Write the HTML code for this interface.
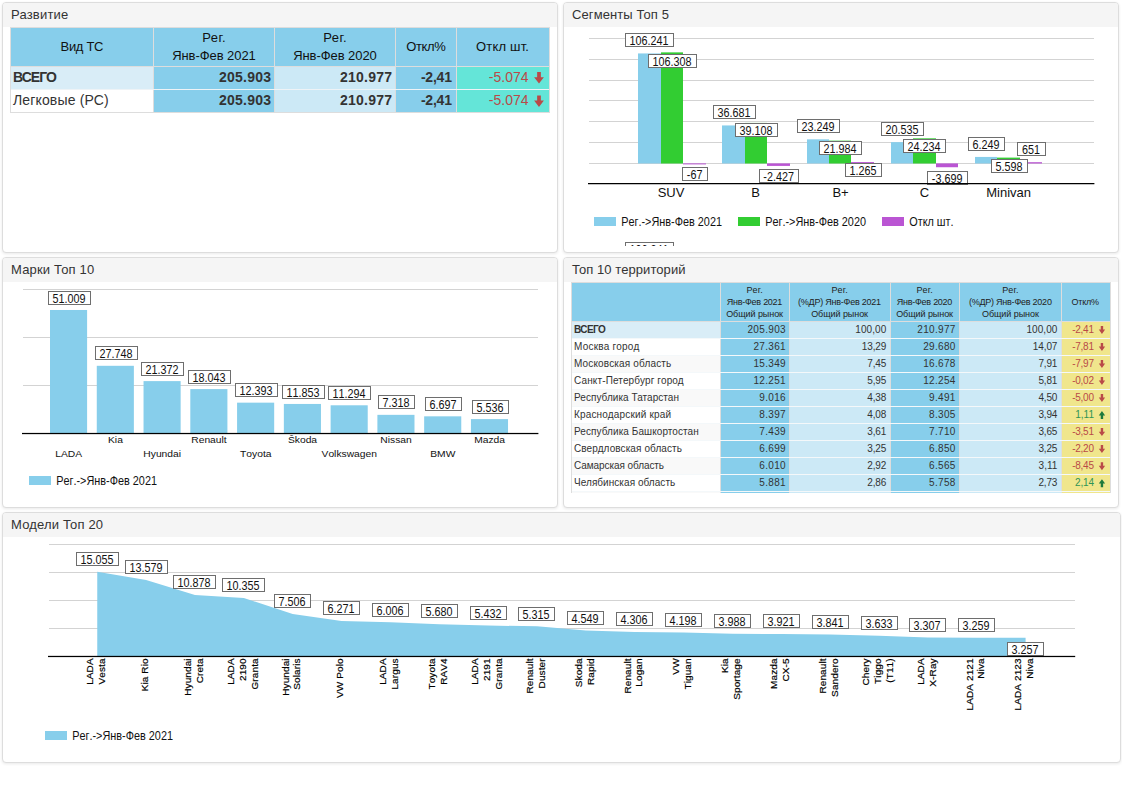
<!DOCTYPE html>
<html lang="ru"><head><meta charset="utf-8"><title>Dashboard</title><style>
html,body{margin:0;padding:0;background:#fff;}
body{width:1122px;height:793px;position:relative;overflow:hidden;font-family:"Liberation Sans",sans-serif;}
.b{position:absolute;}
.t{position:absolute;white-space:nowrap;}
.panel{position:absolute;box-sizing:border-box;border:1px solid #ddd;border-radius:4px;background:#fff;box-shadow:0 1px 3px rgba(0,0,0,.09);}
.ph{height:24px;background:#f5f5f5;border-radius:3px 3px 0 0;}
svg{overflow:visible;}
svg text{font-kerning:none;}
</style></head><body>
<div class="panel" style="left:2px;top:2px;width:556px;height:251px"><div class="ph"></div></div>
<span class="t" style="left:11.00px;top:7.00px;font-size:13px;line-height:15px;color:#333;letter-spacing:0.186px;">Развитие</span>
<div class="panel" style="left:563px;top:2px;width:556px;height:251px"><div class="ph"></div></div>
<span class="t" style="left:572.00px;top:7.00px;font-size:13px;line-height:15px;color:#333;letter-spacing:0.096px;">Сегменты Топ 5</span>
<div class="panel" style="left:2px;top:257px;width:556px;height:251px"><div class="ph"></div></div>
<span class="t" style="left:11.00px;top:262.00px;font-size:13px;line-height:15px;color:#333;letter-spacing:0.175px;">Марки Топ 10</span>
<div class="panel" style="left:563px;top:257px;width:556px;height:251px"><div class="ph"></div></div>
<span class="t" style="left:572.00px;top:262.00px;font-size:13px;line-height:15px;color:#333;letter-spacing:0.066px;">Топ 10 территорий</span>
<div class="panel" style="left:2px;top:512px;width:1119px;height:251px"><div class="ph"></div></div>
<span class="t" style="left:11.00px;top:517.00px;font-size:13px;line-height:15px;color:#333;letter-spacing:0.165px;">Модели Топ 20</span>
<div class="b" style="left:10px;top:27px;width:540px;height:86px;background:#dddddd;"></div>
<div class="b" style="left:11px;top:89px;width:538px;height:1px;background:#eef3f6;"></div>
<div class="b" style="left:11px;top:28px;width:142px;height:38px;background:#87ceeb;"></div>
<div class="b" style="left:11px;top:67px;width:142px;height:22px;background:#d9edf7;"></div>
<div class="b" style="left:11px;top:90px;width:142px;height:22px;background:#ffffff;"></div>
<div class="b" style="left:154px;top:28px;width:120px;height:38px;background:#87ceeb;"></div>
<div class="b" style="left:154px;top:67px;width:120px;height:22px;background:#87ceeb;"></div>
<div class="b" style="left:154px;top:90px;width:120px;height:22px;background:#87ceeb;"></div>
<div class="b" style="left:275px;top:28px;width:120px;height:38px;background:#87ceeb;"></div>
<div class="b" style="left:275px;top:67px;width:120px;height:22px;background:#cce9f6;"></div>
<div class="b" style="left:275px;top:90px;width:120px;height:22px;background:#cce9f6;"></div>
<div class="b" style="left:396px;top:28px;width:60px;height:38px;background:#87ceeb;"></div>
<div class="b" style="left:396px;top:67px;width:60px;height:22px;background:#87ceeb;"></div>
<div class="b" style="left:396px;top:90px;width:60px;height:22px;background:#87ceeb;"></div>
<div class="b" style="left:457px;top:28px;width:92px;height:38px;background:#87ceeb;"></div>
<div class="b" style="left:457px;top:67px;width:92px;height:22px;background:#64e5d8;"></div>
<div class="b" style="left:457px;top:90px;width:92px;height:22px;background:#64e5d8;"></div>
<span class="t" style="left:60.50px;top:39.00px;font-size:13px;line-height:15px;color:#111;letter-spacing:-0.291px;">Вид ТС</span>
<span class="t" style="left:202.28px;top:30.00px;font-size:13px;line-height:15px;color:#111;letter-spacing:0.451px;">Рег.</span>
<span class="t" style="left:172.16px;top:48.00px;font-size:13px;line-height:15px;color:#111;letter-spacing:-0.062px;">Янв-Фев 2021</span>
<span class="t" style="left:323.28px;top:30.00px;font-size:13px;line-height:15px;color:#111;letter-spacing:0.451px;">Рег.</span>
<span class="t" style="left:293.16px;top:48.00px;font-size:13px;line-height:15px;color:#111;letter-spacing:-0.062px;">Янв-Фев 2020</span>
<span class="t" style="left:406.19px;top:39.00px;font-size:13px;line-height:15px;color:#111;letter-spacing:-0.357px;">Откл%</span>
<span class="t" style="left:476.01px;top:39.00px;font-size:13px;line-height:15px;color:#111;letter-spacing:0.189px;">Откл шт.</span>
<span class="t" style="left:13.00px;top:69.00px;font-size:14px;line-height:16px;color:#333;font-weight:bold;letter-spacing:-0.941px;">ВСЕГО</span>
<span class="t" style="left:218.98px;top:69.00px;font-size:14px;line-height:16px;color:#333;font-weight:bold;letter-spacing:0.235px;">205.903</span>
<span class="t" style="left:339.98px;top:69.00px;font-size:14px;line-height:16px;color:#333;font-weight:bold;letter-spacing:0.235px;">210.977</span>
<span class="t" style="left:420.90px;top:69.00px;font-size:14px;line-height:16px;color:#333;font-weight:bold;letter-spacing:-0.202px;">-2,41</span>
<span class="t" style="left:488.79px;top:69.00px;font-size:14px;line-height:16px;color:#b94a48;letter-spacing:0.023px;">-5.074</span>
<svg class="b" style="left:0;top:0" width="1122" height="793"><polygon transform="translate(534.1,72.1) scale(0.9800,1.1500)" points="3.1,0 6.9,0 6.9,4.5 10,4.5 5,10 0,4.5 3.1,4.5" fill="#b94a48"/></svg>
<span class="t" style="left:13.00px;top:92.30px;font-size:14px;line-height:16px;color:#333;letter-spacing:0.145px;">Легковые (РС)</span>
<span class="t" style="left:218.98px;top:92.30px;font-size:14px;line-height:16px;color:#333;font-weight:bold;letter-spacing:0.235px;">205.903</span>
<span class="t" style="left:339.98px;top:92.30px;font-size:14px;line-height:16px;color:#333;font-weight:bold;letter-spacing:0.235px;">210.977</span>
<span class="t" style="left:420.90px;top:92.30px;font-size:14px;line-height:16px;color:#333;font-weight:bold;letter-spacing:-0.202px;">-2,41</span>
<span class="t" style="left:488.79px;top:92.30px;font-size:14px;line-height:16px;color:#b94a48;letter-spacing:0.023px;">-5.074</span>
<svg class="b" style="left:0;top:0" width="1122" height="793"><polygon transform="translate(534.1,95.39999999999999) scale(0.9800,1.1500)" points="3.1,0 6.9,0 6.9,4.5 10,4.5 5,10 0,4.5 3.1,4.5" fill="#b94a48"/></svg>
<div class="b" style="left:571px;top:282px;width:540px;height:211px;overflow:hidden">
<div class="b" style="left:0px;top:0px;width:540px;height:230px;background:#dddddd;"></div>
<div class="b" style="left:1px;top:1px;width:148px;height:38px;background:#87ceeb;"></div>
<div class="b" style="left:150px;top:1px;width:68px;height:38px;background:#87ceeb;"></div>
<div class="b" style="left:219px;top:1px;width:100px;height:38px;background:#87ceeb;"></div>
<div class="b" style="left:320px;top:1px;width:68px;height:38px;background:#87ceeb;"></div>
<div class="b" style="left:389px;top:1px;width:101px;height:38px;background:#87ceeb;"></div>
<div class="b" style="left:491px;top:1px;width:48px;height:38px;background:#87ceeb;"></div>
<div class="b" style="left:1px;top:40px;width:148px;height:16px;background:#d9edf7;"></div>
<div class="b" style="left:150px;top:40px;width:68px;height:16px;background:#87ceeb;"></div>
<div class="b" style="left:219px;top:40px;width:100px;height:16px;background:#cce9f6;"></div>
<div class="b" style="left:320px;top:40px;width:68px;height:16px;background:#87ceeb;"></div>
<div class="b" style="left:389px;top:40px;width:101px;height:16px;background:#cce9f6;"></div>
<div class="b" style="left:491px;top:40px;width:48px;height:16px;background:#f0e68c;"></div>
<div class="b" style="left:1px;top:56px;width:538px;height:1px;background:#f4f8fa;"></div>
<div class="b" style="left:1px;top:57px;width:148px;height:16px;background:#ffffff;"></div>
<div class="b" style="left:150px;top:57px;width:68px;height:16px;background:#87ceeb;"></div>
<div class="b" style="left:219px;top:57px;width:100px;height:16px;background:#cce9f6;"></div>
<div class="b" style="left:320px;top:57px;width:68px;height:16px;background:#87ceeb;"></div>
<div class="b" style="left:389px;top:57px;width:101px;height:16px;background:#cce9f6;"></div>
<div class="b" style="left:491px;top:57px;width:48px;height:16px;background:#f0e68c;"></div>
<div class="b" style="left:1px;top:73px;width:538px;height:1px;background:#f4f8fa;"></div>
<div class="b" style="left:1px;top:74px;width:148px;height:16px;background:#f9f9f9;"></div>
<div class="b" style="left:150px;top:74px;width:68px;height:16px;background:#87ceeb;"></div>
<div class="b" style="left:219px;top:74px;width:100px;height:16px;background:#cce9f6;"></div>
<div class="b" style="left:320px;top:74px;width:68px;height:16px;background:#87ceeb;"></div>
<div class="b" style="left:389px;top:74px;width:101px;height:16px;background:#cce9f6;"></div>
<div class="b" style="left:491px;top:74px;width:48px;height:16px;background:#f0e68c;"></div>
<div class="b" style="left:1px;top:90px;width:538px;height:1px;background:#f4f8fa;"></div>
<div class="b" style="left:1px;top:91px;width:148px;height:16px;background:#ffffff;"></div>
<div class="b" style="left:150px;top:91px;width:68px;height:16px;background:#87ceeb;"></div>
<div class="b" style="left:219px;top:91px;width:100px;height:16px;background:#cce9f6;"></div>
<div class="b" style="left:320px;top:91px;width:68px;height:16px;background:#87ceeb;"></div>
<div class="b" style="left:389px;top:91px;width:101px;height:16px;background:#cce9f6;"></div>
<div class="b" style="left:491px;top:91px;width:48px;height:16px;background:#f0e68c;"></div>
<div class="b" style="left:1px;top:107px;width:538px;height:1px;background:#f4f8fa;"></div>
<div class="b" style="left:1px;top:108px;width:148px;height:16px;background:#f9f9f9;"></div>
<div class="b" style="left:150px;top:108px;width:68px;height:16px;background:#87ceeb;"></div>
<div class="b" style="left:219px;top:108px;width:100px;height:16px;background:#cce9f6;"></div>
<div class="b" style="left:320px;top:108px;width:68px;height:16px;background:#87ceeb;"></div>
<div class="b" style="left:389px;top:108px;width:101px;height:16px;background:#cce9f6;"></div>
<div class="b" style="left:491px;top:108px;width:48px;height:16px;background:#f0e68c;"></div>
<div class="b" style="left:1px;top:124px;width:538px;height:1px;background:#f4f8fa;"></div>
<div class="b" style="left:1px;top:125px;width:148px;height:16px;background:#ffffff;"></div>
<div class="b" style="left:150px;top:125px;width:68px;height:16px;background:#87ceeb;"></div>
<div class="b" style="left:219px;top:125px;width:100px;height:16px;background:#cce9f6;"></div>
<div class="b" style="left:320px;top:125px;width:68px;height:16px;background:#87ceeb;"></div>
<div class="b" style="left:389px;top:125px;width:101px;height:16px;background:#cce9f6;"></div>
<div class="b" style="left:491px;top:125px;width:48px;height:16px;background:#f0e68c;"></div>
<div class="b" style="left:1px;top:141px;width:538px;height:1px;background:#f4f8fa;"></div>
<div class="b" style="left:1px;top:142px;width:148px;height:16px;background:#f9f9f9;"></div>
<div class="b" style="left:150px;top:142px;width:68px;height:16px;background:#87ceeb;"></div>
<div class="b" style="left:219px;top:142px;width:100px;height:16px;background:#cce9f6;"></div>
<div class="b" style="left:320px;top:142px;width:68px;height:16px;background:#87ceeb;"></div>
<div class="b" style="left:389px;top:142px;width:101px;height:16px;background:#cce9f6;"></div>
<div class="b" style="left:491px;top:142px;width:48px;height:16px;background:#f0e68c;"></div>
<div class="b" style="left:1px;top:158px;width:538px;height:1px;background:#f4f8fa;"></div>
<div class="b" style="left:1px;top:159px;width:148px;height:16px;background:#ffffff;"></div>
<div class="b" style="left:150px;top:159px;width:68px;height:16px;background:#87ceeb;"></div>
<div class="b" style="left:219px;top:159px;width:100px;height:16px;background:#cce9f6;"></div>
<div class="b" style="left:320px;top:159px;width:68px;height:16px;background:#87ceeb;"></div>
<div class="b" style="left:389px;top:159px;width:101px;height:16px;background:#cce9f6;"></div>
<div class="b" style="left:491px;top:159px;width:48px;height:16px;background:#f0e68c;"></div>
<div class="b" style="left:1px;top:175px;width:538px;height:1px;background:#f4f8fa;"></div>
<div class="b" style="left:1px;top:176px;width:148px;height:16px;background:#f9f9f9;"></div>
<div class="b" style="left:150px;top:176px;width:68px;height:16px;background:#87ceeb;"></div>
<div class="b" style="left:219px;top:176px;width:100px;height:16px;background:#cce9f6;"></div>
<div class="b" style="left:320px;top:176px;width:68px;height:16px;background:#87ceeb;"></div>
<div class="b" style="left:389px;top:176px;width:101px;height:16px;background:#cce9f6;"></div>
<div class="b" style="left:491px;top:176px;width:48px;height:16px;background:#f0e68c;"></div>
<div class="b" style="left:1px;top:192px;width:538px;height:1px;background:#f4f8fa;"></div>
<div class="b" style="left:1px;top:193px;width:148px;height:16px;background:#ffffff;"></div>
<div class="b" style="left:150px;top:193px;width:68px;height:16px;background:#87ceeb;"></div>
<div class="b" style="left:219px;top:193px;width:100px;height:16px;background:#cce9f6;"></div>
<div class="b" style="left:320px;top:193px;width:68px;height:16px;background:#87ceeb;"></div>
<div class="b" style="left:389px;top:193px;width:101px;height:16px;background:#cce9f6;"></div>
<div class="b" style="left:491px;top:193px;width:48px;height:16px;background:#f0e68c;"></div>
<div class="b" style="left:1px;top:209px;width:538px;height:1px;background:#f4f8fa;"></div>
<div class="b" style="left:1px;top:210px;width:148px;height:16px;background:#f9f9f9;"></div>
<div class="b" style="left:150px;top:210px;width:68px;height:16px;background:#87ceeb;"></div>
<div class="b" style="left:219px;top:210px;width:100px;height:16px;background:#cce9f6;"></div>
<div class="b" style="left:320px;top:210px;width:68px;height:16px;background:#87ceeb;"></div>
<div class="b" style="left:389px;top:210px;width:101px;height:16px;background:#cce9f6;"></div>
<div class="b" style="left:491px;top:210px;width:48px;height:16px;background:#f0e68c;"></div>
</div>
<span class="t" style="left:746.48px;top:285.00px;font-size:9px;line-height:10px;color:#222;letter-spacing:0.312px;">Рег.</span>
<span class="t" style="left:726.83px;top:297.00px;font-size:9px;line-height:10px;color:#222;letter-spacing:-0.260px;">Янв-Фев 2021</span>
<span class="t" style="left:726.17px;top:309.00px;font-size:9px;line-height:10px;color:#222;letter-spacing:-0.064px;">Общий рынок</span>
<span class="t" style="left:831.48px;top:285.00px;font-size:9px;line-height:10px;color:#222;letter-spacing:0.312px;">Рег.</span>
<span class="t" style="left:798.10px;top:297.00px;font-size:9px;line-height:10px;color:#222;letter-spacing:-0.235px;">(%ДР) Янв-Фев 2021</span>
<span class="t" style="left:811.17px;top:309.00px;font-size:9px;line-height:10px;color:#222;letter-spacing:-0.064px;">Общий рынок</span>
<span class="t" style="left:916.48px;top:285.00px;font-size:9px;line-height:10px;color:#222;letter-spacing:0.312px;">Рег.</span>
<span class="t" style="left:896.83px;top:297.00px;font-size:9px;line-height:10px;color:#222;letter-spacing:-0.260px;">Янв-Фев 2020</span>
<span class="t" style="left:896.17px;top:309.00px;font-size:9px;line-height:10px;color:#222;letter-spacing:-0.064px;">Общий рынок</span>
<span class="t" style="left:1002.28px;top:285.00px;font-size:9px;line-height:10px;color:#222;letter-spacing:0.312px;">Рег.</span>
<span class="t" style="left:968.90px;top:297.00px;font-size:9px;line-height:10px;color:#222;letter-spacing:-0.235px;">(%ДР) Янв-Фев 2020</span>
<span class="t" style="left:981.97px;top:309.00px;font-size:9px;line-height:10px;color:#222;letter-spacing:-0.064px;">Общий рынок</span>
<span class="t" style="left:1071.59px;top:297.00px;font-size:9px;line-height:10px;color:#222;letter-spacing:-0.247px;">Откл%</span>
<span class="t" style="left:574.00px;top:324.00px;font-size:10px;line-height:11px;color:#333;font-weight:bold;letter-spacing:-0.572px;">ВСЕГО</span>
<span class="t" style="left:747.47px;top:324.00px;font-size:10px;line-height:11px;color:#333;letter-spacing:0.330px;">205.903</span>
<span class="t" style="left:855.31px;top:324.00px;font-size:10px;line-height:11px;color:#333;letter-spacing:0.080px;">100,00</span>
<span class="t" style="left:917.27px;top:324.00px;font-size:10px;line-height:11px;color:#333;letter-spacing:0.330px;">210.977</span>
<span class="t" style="left:1026.41px;top:324.00px;font-size:10px;line-height:11px;color:#333;letter-spacing:0.080px;">100,00</span>
<span class="t" style="left:1072.17px;top:324.00px;font-size:10px;line-height:11px;color:#b94a48;letter-spacing:-0.240px;">-2,41</span>
<svg class="b" style="left:0;top:0" width="1122" height="793"><polygon transform="translate(1098.8,325.9) scale(0.6300,0.8000)" points="3.1,0 6.9,0 6.9,4.5 10,4.5 5,10 0,4.5 3.1,4.5" fill="#b94a48"/></svg>
<span class="t" style="left:574.00px;top:341.03px;font-size:10px;line-height:11px;color:#333;letter-spacing:0.239px;">Москва город</span>
<span class="t" style="left:753.39px;top:341.03px;font-size:10px;line-height:11px;color:#333;letter-spacing:0.325px;">27.361</span>
<span class="t" style="left:861.74px;top:341.03px;font-size:10px;line-height:11px;color:#333;letter-spacing:-0.115px;">13,29</span>
<span class="t" style="left:923.19px;top:341.03px;font-size:10px;line-height:11px;color:#333;letter-spacing:0.325px;">29.680</span>
<span class="t" style="left:1032.84px;top:341.03px;font-size:10px;line-height:11px;color:#333;letter-spacing:-0.115px;">14,07</span>
<span class="t" style="left:1072.17px;top:341.03px;font-size:10px;line-height:11px;color:#b94a48;letter-spacing:-0.240px;">-7,81</span>
<svg class="b" style="left:0;top:0" width="1122" height="793"><polygon transform="translate(1098.8,342.92999999999995) scale(0.6300,0.8000)" points="3.1,0 6.9,0 6.9,4.5 10,4.5 5,10 0,4.5 3.1,4.5" fill="#b94a48"/></svg>
<span class="t" style="left:574.00px;top:358.06px;font-size:10px;line-height:11px;color:#333;letter-spacing:0.158px;">Московская область</span>
<span class="t" style="left:753.39px;top:358.06px;font-size:10px;line-height:11px;color:#333;letter-spacing:0.325px;">15.349</span>
<span class="t" style="left:867.31px;top:358.06px;font-size:10px;line-height:11px;color:#333;letter-spacing:-0.159px;">7,45</span>
<span class="t" style="left:923.19px;top:358.06px;font-size:10px;line-height:11px;color:#333;letter-spacing:0.325px;">16.678</span>
<span class="t" style="left:1038.41px;top:358.06px;font-size:10px;line-height:11px;color:#333;letter-spacing:-0.159px;">7,91</span>
<span class="t" style="left:1072.17px;top:358.06px;font-size:10px;line-height:11px;color:#b94a48;letter-spacing:-0.240px;">-7,97</span>
<svg class="b" style="left:0;top:0" width="1122" height="793"><polygon transform="translate(1098.8,359.96) scale(0.6300,0.8000)" points="3.1,0 6.9,0 6.9,4.5 10,4.5 5,10 0,4.5 3.1,4.5" fill="#b94a48"/></svg>
<span class="t" style="left:574.00px;top:375.09px;font-size:10px;line-height:11px;color:#333;letter-spacing:0.135px;">Санкт-Петербург город</span>
<span class="t" style="left:753.39px;top:375.09px;font-size:10px;line-height:11px;color:#333;letter-spacing:0.325px;">12.251</span>
<span class="t" style="left:867.31px;top:375.09px;font-size:10px;line-height:11px;color:#333;letter-spacing:-0.159px;">5,95</span>
<span class="t" style="left:923.19px;top:375.09px;font-size:10px;line-height:11px;color:#333;letter-spacing:0.325px;">12.254</span>
<span class="t" style="left:1038.41px;top:375.09px;font-size:10px;line-height:11px;color:#333;letter-spacing:-0.159px;">5,81</span>
<span class="t" style="left:1072.17px;top:375.09px;font-size:10px;line-height:11px;color:#b94a48;letter-spacing:-0.240px;">-0,02</span>
<svg class="b" style="left:0;top:0" width="1122" height="793"><polygon transform="translate(1098.8,376.99) scale(0.6300,0.8000)" points="3.1,0 6.9,0 6.9,4.5 10,4.5 5,10 0,4.5 3.1,4.5" fill="#b94a48"/></svg>
<span class="t" style="left:574.00px;top:392.12px;font-size:10px;line-height:11px;color:#333;letter-spacing:0.047px;">Республика Татарстан</span>
<span class="t" style="left:759.30px;top:392.12px;font-size:10px;line-height:11px;color:#333;letter-spacing:0.319px;">9.016</span>
<span class="t" style="left:867.31px;top:392.12px;font-size:10px;line-height:11px;color:#333;letter-spacing:-0.159px;">4,38</span>
<span class="t" style="left:929.10px;top:392.12px;font-size:10px;line-height:11px;color:#333;letter-spacing:0.319px;">9.491</span>
<span class="t" style="left:1038.41px;top:392.12px;font-size:10px;line-height:11px;color:#333;letter-spacing:-0.159px;">4,50</span>
<span class="t" style="left:1072.17px;top:392.12px;font-size:10px;line-height:11px;color:#b94a48;letter-spacing:-0.240px;">-5,00</span>
<svg class="b" style="left:0;top:0" width="1122" height="793"><polygon transform="translate(1098.8,394.02) scale(0.6300,0.8000)" points="3.1,0 6.9,0 6.9,4.5 10,4.5 5,10 0,4.5 3.1,4.5" fill="#b94a48"/></svg>
<span class="t" style="left:574.00px;top:409.15px;font-size:10px;line-height:11px;color:#333;letter-spacing:0.168px;">Краснодарский край</span>
<span class="t" style="left:759.30px;top:409.15px;font-size:10px;line-height:11px;color:#333;letter-spacing:0.319px;">8.397</span>
<span class="t" style="left:867.31px;top:409.15px;font-size:10px;line-height:11px;color:#333;letter-spacing:-0.159px;">4,08</span>
<span class="t" style="left:929.10px;top:409.15px;font-size:10px;line-height:11px;color:#333;letter-spacing:0.319px;">8.305</span>
<span class="t" style="left:1038.41px;top:409.15px;font-size:10px;line-height:11px;color:#333;letter-spacing:-0.159px;">3,94</span>
<span class="t" style="left:1075.20px;top:409.15px;font-size:10px;line-height:11px;color:#2f9455;letter-spacing:0.027px;">1,11</span>
<svg class="b" style="left:0;top:0" width="1122" height="793"><polygon transform="translate(1098.8,419.04999999999995) scale(0.6300,-0.8000)" points="3.1,0 6.9,0 6.9,4.5 10,4.5 5,10 0,4.5 3.1,4.5" fill="#1f7a3d"/></svg>
<span class="t" style="left:574.00px;top:426.18px;font-size:10px;line-height:11px;color:#333;letter-spacing:0.077px;">Республика Башкортостан</span>
<span class="t" style="left:759.30px;top:426.18px;font-size:10px;line-height:11px;color:#333;letter-spacing:0.319px;">7.439</span>
<span class="t" style="left:867.31px;top:426.18px;font-size:10px;line-height:11px;color:#333;letter-spacing:-0.159px;">3,61</span>
<span class="t" style="left:929.10px;top:426.18px;font-size:10px;line-height:11px;color:#333;letter-spacing:0.319px;">7.710</span>
<span class="t" style="left:1038.41px;top:426.18px;font-size:10px;line-height:11px;color:#333;letter-spacing:-0.159px;">3,65</span>
<span class="t" style="left:1072.17px;top:426.18px;font-size:10px;line-height:11px;color:#b94a48;letter-spacing:-0.240px;">-3,51</span>
<svg class="b" style="left:0;top:0" width="1122" height="793"><polygon transform="translate(1098.8,428.08) scale(0.6300,0.8000)" points="3.1,0 6.9,0 6.9,4.5 10,4.5 5,10 0,4.5 3.1,4.5" fill="#b94a48"/></svg>
<span class="t" style="left:574.00px;top:443.21px;font-size:10px;line-height:11px;color:#333;letter-spacing:0.092px;">Свердловская область</span>
<span class="t" style="left:759.30px;top:443.21px;font-size:10px;line-height:11px;color:#333;letter-spacing:0.319px;">6.699</span>
<span class="t" style="left:867.31px;top:443.21px;font-size:10px;line-height:11px;color:#333;letter-spacing:-0.159px;">3,25</span>
<span class="t" style="left:929.10px;top:443.21px;font-size:10px;line-height:11px;color:#333;letter-spacing:0.319px;">6.850</span>
<span class="t" style="left:1038.41px;top:443.21px;font-size:10px;line-height:11px;color:#333;letter-spacing:-0.159px;">3,25</span>
<span class="t" style="left:1072.17px;top:443.21px;font-size:10px;line-height:11px;color:#b94a48;letter-spacing:-0.240px;">-2,20</span>
<svg class="b" style="left:0;top:0" width="1122" height="793"><polygon transform="translate(1098.8,445.11) scale(0.6300,0.8000)" points="3.1,0 6.9,0 6.9,4.5 10,4.5 5,10 0,4.5 3.1,4.5" fill="#b94a48"/></svg>
<span class="t" style="left:574.00px;top:460.24px;font-size:10px;line-height:11px;color:#333;letter-spacing:-0.075px;">Самарская область</span>
<span class="t" style="left:759.30px;top:460.24px;font-size:10px;line-height:11px;color:#333;letter-spacing:0.319px;">6.010</span>
<span class="t" style="left:867.31px;top:460.24px;font-size:10px;line-height:11px;color:#333;letter-spacing:-0.159px;">2,92</span>
<span class="t" style="left:929.10px;top:460.24px;font-size:10px;line-height:11px;color:#333;letter-spacing:0.319px;">6.565</span>
<span class="t" style="left:1038.60px;top:460.24px;font-size:10px;line-height:11px;color:#333;letter-spacing:0.027px;">3,11</span>
<span class="t" style="left:1072.17px;top:460.24px;font-size:10px;line-height:11px;color:#b94a48;letter-spacing:-0.240px;">-8,45</span>
<svg class="b" style="left:0;top:0" width="1122" height="793"><polygon transform="translate(1098.8,462.14) scale(0.6300,0.8000)" points="3.1,0 6.9,0 6.9,4.5 10,4.5 5,10 0,4.5 3.1,4.5" fill="#b94a48"/></svg>
<span class="t" style="left:574.00px;top:477.27px;font-size:10px;line-height:11px;color:#333;letter-spacing:0.049px;">Челябинская область</span>
<span class="t" style="left:759.30px;top:477.27px;font-size:10px;line-height:11px;color:#333;letter-spacing:0.319px;">5.881</span>
<span class="t" style="left:867.31px;top:477.27px;font-size:10px;line-height:11px;color:#333;letter-spacing:-0.159px;">2,86</span>
<span class="t" style="left:929.10px;top:477.27px;font-size:10px;line-height:11px;color:#333;letter-spacing:0.319px;">5.758</span>
<span class="t" style="left:1038.41px;top:477.27px;font-size:10px;line-height:11px;color:#333;letter-spacing:-0.159px;">2,73</span>
<span class="t" style="left:1075.01px;top:477.27px;font-size:10px;line-height:11px;color:#2f9455;letter-spacing:-0.159px;">2,14</span>
<svg class="b" style="left:0;top:0" width="1122" height="793"><polygon transform="translate(1098.8,487.16999999999996) scale(0.6300,-0.8000)" points="3.1,0 6.9,0 6.9,4.5 10,4.5 5,10 0,4.5 3.1,4.5" fill="#1f7a3d"/></svg>
<svg class="b" style="left:0;top:0" width="1122" height="793" font-family='"Liberation Sans", sans-serif'><defs><clipPath id="c2"><rect x="564" y="27" width="554" height="219"/></clipPath></defs><g clip-path="url(#c2)"><rect x="589" y="38" width="505" height="1" fill="#d3d3d3"/><rect x="589" y="59" width="505" height="1" fill="#d3d3d3"/><rect x="589" y="80" width="505" height="1" fill="#d3d3d3"/><rect x="589" y="100" width="505" height="1" fill="#d3d3d3"/><rect x="589" y="121" width="505" height="1" fill="#d3d3d3"/><rect x="589" y="142" width="505" height="1" fill="#d3d3d3"/><rect x="589" y="163" width="505" height="1" fill="#d3d3d3"/><rect x="638" y="53.44" width="23" height="110.06" fill="#87ceeb"/><rect x="661" y="52.37" width="22" height="111.13" fill="#32cd32"/><rect x="683" y="163.40" width="23" height="1.00" fill="#ba55d3"/><rect x="722" y="125.44" width="23" height="38.06" fill="#87ceeb"/><rect x="745" y="122.92" width="22" height="40.58" fill="#32cd32"/><rect x="767" y="163.40" width="23" height="2.51" fill="#ba55d3"/><rect x="807" y="139.34" width="22" height="24.16" fill="#87ceeb"/><rect x="829" y="140.65" width="22" height="22.85" fill="#32cd32"/><rect x="851" y="162.09" width="23" height="1.41" fill="#ba55d3"/><rect x="891" y="142.15" width="22" height="21.35" fill="#87ceeb"/><rect x="913" y="138.32" width="23" height="25.18" fill="#32cd32"/><rect x="936" y="163.40" width="22" height="3.83" fill="#ba55d3"/><rect x="975" y="156.93" width="22" height="6.57" fill="#87ceeb"/><rect x="997" y="157.61" width="23" height="5.89" fill="#32cd32"/><rect x="1020" y="162.20" width="22" height="1.30" fill="#ba55d3"/><rect x="625.5" y="33.5" width="48" height="13" fill="#fff" stroke="#6e6e6e" stroke-width="1"/><text transform="translate(649.10,44.70) scale(1,1.14)" text-anchor="middle" font-size="10.8" fill="#111">106.241</text><rect x="648.5" y="54.5" width="48" height="13" fill="#fff" stroke="#6e6e6e" stroke-width="1"/><text transform="translate(672.10,65.70) scale(1,1.14)" text-anchor="middle" font-size="10.8" fill="#111">106.308</text><rect x="682.5" y="167.5" width="25" height="13" fill="#fff" stroke="#6e6e6e" stroke-width="1"/><text transform="translate(694.60,178.70) scale(1,1.14)" text-anchor="middle" font-size="10.8" fill="#111">-67</text><rect x="713.5" y="105.5" width="42" height="13" fill="#fff" stroke="#6e6e6e" stroke-width="1"/><text transform="translate(734.10,116.70) scale(1,1.14)" text-anchor="middle" font-size="10.8" fill="#111">36.681</text><rect x="735.5" y="123.5" width="42" height="13" fill="#fff" stroke="#6e6e6e" stroke-width="1"/><text transform="translate(756.10,134.70) scale(1,1.14)" text-anchor="middle" font-size="10.8" fill="#111">39.108</text><rect x="759.5" y="169.5" width="39" height="13" fill="#fff" stroke="#6e6e6e" stroke-width="1"/><text transform="translate(778.60,180.70) scale(1,1.14)" text-anchor="middle" font-size="10.8" fill="#111">-2.427</text><rect x="797.5" y="119.5" width="42" height="13" fill="#fff" stroke="#6e6e6e" stroke-width="1"/><text transform="translate(818.10,130.70) scale(1,1.14)" text-anchor="middle" font-size="10.8" fill="#111">23.249</text><rect x="819.5" y="141.5" width="42" height="13" fill="#fff" stroke="#6e6e6e" stroke-width="1"/><text transform="translate(840.10,152.70) scale(1,1.14)" text-anchor="middle" font-size="10.8" fill="#111">21.984</text><rect x="845.5" y="163.5" width="36" height="13" fill="#fff" stroke="#6e6e6e" stroke-width="1"/><text transform="translate(863.10,174.70) scale(1,1.14)" text-anchor="middle" font-size="10.8" fill="#111">1.265</text><rect x="881.5" y="122.5" width="42" height="13" fill="#fff" stroke="#6e6e6e" stroke-width="1"/><text transform="translate(902.10,133.70) scale(1,1.14)" text-anchor="middle" font-size="10.8" fill="#111">20.535</text><rect x="903.5" y="139.5" width="42" height="13" fill="#fff" stroke="#6e6e6e" stroke-width="1"/><text transform="translate(924.10,150.70) scale(1,1.14)" text-anchor="middle" font-size="10.8" fill="#111">24.234</text><rect x="927.5" y="171.5" width="40" height="13" fill="#fff" stroke="#6e6e6e" stroke-width="1"/><text transform="translate(947.10,182.70) scale(1,1.14)" text-anchor="middle" font-size="10.8" fill="#111">-3.699</text><rect x="968.5" y="137.5" width="36" height="13" fill="#fff" stroke="#6e6e6e" stroke-width="1"/><text transform="translate(986.10,148.70) scale(1,1.14)" text-anchor="middle" font-size="10.8" fill="#111">6.249</text><rect x="991.5" y="159.5" width="36" height="13" fill="#fff" stroke="#6e6e6e" stroke-width="1"/><text transform="translate(1009.10,170.70) scale(1,1.14)" text-anchor="middle" font-size="10.8" fill="#111">5.598</text><rect x="1017.5" y="142.5" width="28" height="13" fill="#fff" stroke="#6e6e6e" stroke-width="1"/><text transform="translate(1031.10,153.70) scale(1,1.14)" text-anchor="middle" font-size="10.8" fill="#111">651</text><rect x="588" y="183" width="506.4" height="1.25" fill="#000"/><text x="671" y="196.8" text-anchor="middle" font-size="13" fill="#111">SUV</text><text x="755.6" y="196.8" text-anchor="middle" font-size="13" fill="#111">B</text><text x="840.6" y="196.8" text-anchor="middle" font-size="13" fill="#111">B+</text><text x="924.5" y="196.8" text-anchor="middle" font-size="13" fill="#111">C</text><text x="1008.6" y="196.8" text-anchor="middle" font-size="13" fill="#111">Minivan</text><rect x="594" y="217" width="22" height="9" fill="#87ceeb"/><text transform="translate(621.2,226.2) scale(1,1.14)" font-size="10.88" fill="#111">Рег.->Янв-Фев 2021</text><rect x="738" y="217" width="22" height="9" fill="#32cd32"/><text transform="translate(765.2,226.2) scale(1,1.14)" font-size="10.88" fill="#111">Рег.->Янв-Фев 2020</text><rect x="882" y="217" width="22" height="9" fill="#ba55d3"/><text transform="translate(909.2,226.2) scale(1,1.14)" font-size="10.88" fill="#111">Откл шт.</text><rect x="625.5" y="242.5" width="48" height="13" fill="#fff" stroke="#6e6e6e" stroke-width="1"/><text transform="translate(649.10,253.70) scale(1,1.14)" text-anchor="middle" font-size="10.8" fill="#111">106.241</text></g></svg>
<svg class="b" style="left:0;top:0" width="1122" height="793" font-family='"Liberation Sans", sans-serif'><rect x="23" y="289" width="515" height="1" fill="#d3d3d3"/><rect x="23" y="337" width="515" height="1" fill="#d3d3d3"/><rect x="23" y="385" width="515" height="1" fill="#d3d3d3"/><rect x="50.00" y="309.98" width="37.1" height="123.22" fill="#87ceeb"/><rect x="48.5" y="291.5" width="42" height="13" fill="#fff" stroke="#6e6e6e" stroke-width="1"/><text transform="translate(69.10,302.70) scale(1,1.14)" text-anchor="middle" font-size="10.8" fill="#111">51.009</text><text transform="translate(68.65,456.8) scale(1,0.93)" text-anchor="middle" font-size="10.3" fill="#111">LADA</text><rect x="96.77" y="365.80" width="37.1" height="67.40" fill="#87ceeb"/><rect x="95.5" y="346.5" width="42" height="13" fill="#fff" stroke="#6e6e6e" stroke-width="1"/><text transform="translate(116.10,357.70) scale(1,1.14)" text-anchor="middle" font-size="10.8" fill="#111">27.748</text><text transform="translate(115.42,443.2) scale(1,0.93)" text-anchor="middle" font-size="10.3" fill="#111">Kia</text><rect x="143.54" y="381.11" width="37.1" height="52.09" fill="#87ceeb"/><rect x="141.5" y="362.5" width="42" height="13" fill="#fff" stroke="#6e6e6e" stroke-width="1"/><text transform="translate(162.10,373.70) scale(1,1.14)" text-anchor="middle" font-size="10.8" fill="#111">21.372</text><text transform="translate(162.19,456.8) scale(1,0.93)" text-anchor="middle" font-size="10.3" fill="#111">Hyundai</text><rect x="190.31" y="389.10" width="37.1" height="44.10" fill="#87ceeb"/><rect x="188.5" y="370.5" width="42" height="13" fill="#fff" stroke="#6e6e6e" stroke-width="1"/><text transform="translate(209.10,381.70) scale(1,1.14)" text-anchor="middle" font-size="10.8" fill="#111">18.043</text><text transform="translate(208.96,443.2) scale(1,0.93)" text-anchor="middle" font-size="10.3" fill="#111">Renault</text><rect x="237.08" y="402.66" width="37.1" height="30.54" fill="#87ceeb"/><rect x="235.5" y="383.5" width="42" height="13" fill="#fff" stroke="#6e6e6e" stroke-width="1"/><text transform="translate(256.10,394.70) scale(1,1.14)" text-anchor="middle" font-size="10.8" fill="#111">12.393</text><text transform="translate(255.73,456.8) scale(1,0.93)" text-anchor="middle" font-size="10.3" fill="#111">Toyota</text><rect x="283.85" y="403.95" width="37.1" height="29.25" fill="#87ceeb"/><rect x="282.5" y="385.5" width="42" height="13" fill="#fff" stroke="#6e6e6e" stroke-width="1"/><text transform="translate(303.10,396.70) scale(1,1.14)" text-anchor="middle" font-size="10.8" fill="#111">11.853</text><text transform="translate(302.50,443.2) scale(1,0.93)" text-anchor="middle" font-size="10.3" fill="#111">Škoda</text><rect x="330.62" y="405.29" width="37.1" height="27.91" fill="#87ceeb"/><rect x="328.5" y="386.5" width="42" height="13" fill="#fff" stroke="#6e6e6e" stroke-width="1"/><text transform="translate(349.10,397.70) scale(1,1.14)" text-anchor="middle" font-size="10.8" fill="#111">11.294</text><text transform="translate(349.27,456.8) scale(1,0.93)" text-anchor="middle" font-size="10.3" fill="#111">Volkswagen</text><rect x="377.39" y="414.84" width="37.1" height="18.36" fill="#87ceeb"/><rect x="378.5" y="395.5" width="36" height="13" fill="#fff" stroke="#6e6e6e" stroke-width="1"/><text transform="translate(396.10,406.70) scale(1,1.14)" text-anchor="middle" font-size="10.8" fill="#111">7.318</text><text transform="translate(396.04,443.2) scale(1,0.93)" text-anchor="middle" font-size="10.3" fill="#111">Nissan</text><rect x="424.16" y="416.33" width="37.1" height="16.87" fill="#87ceeb"/><rect x="425.5" y="397.5" width="36" height="13" fill="#fff" stroke="#6e6e6e" stroke-width="1"/><text transform="translate(443.10,408.70) scale(1,1.14)" text-anchor="middle" font-size="10.8" fill="#111">6.697</text><text transform="translate(442.81,456.8) scale(1,0.93)" text-anchor="middle" font-size="10.3" fill="#111">BMW</text><rect x="470.93" y="419.11" width="37.1" height="14.09" fill="#87ceeb"/><rect x="472.5" y="400.5" width="36" height="13" fill="#fff" stroke="#6e6e6e" stroke-width="1"/><text transform="translate(490.10,411.70) scale(1,1.14)" text-anchor="middle" font-size="10.8" fill="#111">5.536</text><text transform="translate(489.58,443.2) scale(1,0.93)" text-anchor="middle" font-size="10.3" fill="#111">Mazda</text><rect x="22" y="432.9" width="516.4" height="1.25" fill="#000"/><rect x="29" y="476" width="22" height="9" fill="#87ceeb"/><text transform="translate(56.2,485.2) scale(1,1.14)" font-size="10.88" fill="#111">Рег.->Янв-Фев 2021</text></svg>
<svg class="b" style="left:0;top:0" width="1122" height="793" font-family='"Liberation Sans", sans-serif'><rect x="49" y="544" width="1026" height="1" fill="#d3d3d3"/><rect x="49" y="572" width="1026" height="1" fill="#d3d3d3"/><rect x="49" y="600" width="1026" height="1" fill="#d3d3d3"/><rect x="49" y="628" width="1026" height="1" fill="#d3d3d3"/><path d="M97.25,656.0 L97.25,571.69 L146.11,579.96 L194.97,595.08 L243.83,598.01 L292.69,613.97 L341.55,620.88 L390.41,622.37 L439.27,624.19 L488.13,625.58 L536.99,626.24 L585.85,630.53 L634.71,631.89 L683.57,632.49 L732.43,633.67 L781.29,634.04 L830.15,634.49 L879.01,635.66 L927.87,637.48 L976.73,637.75 L1025.59,637.76 L1025.59,656.0 Z" fill="#87ceeb"/><rect x="76.5" y="552.5" width="42" height="13" fill="#fff" stroke="#6e6e6e" stroke-width="1"/><text transform="translate(97.10,563.70) scale(1,1.14)" text-anchor="middle" font-size="10.8" fill="#111">15.055</text><text transform="translate(93.10,658.3) rotate(-90) scale(1,0.88)" text-anchor="end" font-size="10" letter-spacing="0.12" fill="#000" stroke="#000" stroke-width="0.2">LADA</text><text transform="translate(105.00,658.3) rotate(-90) scale(1,0.88)" text-anchor="end" font-size="10" letter-spacing="0.12" fill="#000" stroke="#000" stroke-width="0.2">Vesta</text><rect x="125.5" y="560.5" width="42" height="13" fill="#fff" stroke="#6e6e6e" stroke-width="1"/><text transform="translate(146.10,571.70) scale(1,1.14)" text-anchor="middle" font-size="10.8" fill="#111">13.579</text><text transform="translate(147.91,658.3) rotate(-90) scale(1,0.88)" text-anchor="end" font-size="10" letter-spacing="0.12" fill="#000" stroke="#000" stroke-width="0.2">Kia Rio</text><rect x="173.5" y="575.5" width="42" height="13" fill="#fff" stroke="#6e6e6e" stroke-width="1"/><text transform="translate(194.10,586.70) scale(1,1.14)" text-anchor="middle" font-size="10.8" fill="#111">10.878</text><text transform="translate(190.82,658.3) rotate(-90) scale(1,0.88)" text-anchor="end" font-size="10" letter-spacing="0.12" fill="#000" stroke="#000" stroke-width="0.2">Hyundai</text><text transform="translate(202.72,658.3) rotate(-90) scale(1,0.88)" text-anchor="end" font-size="10" letter-spacing="0.12" fill="#000" stroke="#000" stroke-width="0.2">Creta</text><rect x="222.5" y="578.5" width="42" height="13" fill="#fff" stroke="#6e6e6e" stroke-width="1"/><text transform="translate(243.10,589.70) scale(1,1.14)" text-anchor="middle" font-size="10.8" fill="#111">10.355</text><text transform="translate(233.73,658.3) rotate(-90) scale(1,0.88)" text-anchor="end" font-size="10" letter-spacing="0.12" fill="#000" stroke="#000" stroke-width="0.2">LADA</text><text transform="translate(245.63,658.3) rotate(-90) scale(1,0.88)" text-anchor="end" font-size="10" letter-spacing="0.12" fill="#000" stroke="#000" stroke-width="0.2">2190</text><text transform="translate(257.53,658.3) rotate(-90) scale(1,0.88)" text-anchor="end" font-size="10" letter-spacing="0.12" fill="#000" stroke="#000" stroke-width="0.2">Granta</text><rect x="274.5" y="594.5" width="36" height="13" fill="#fff" stroke="#6e6e6e" stroke-width="1"/><text transform="translate(292.10,605.70) scale(1,1.14)" text-anchor="middle" font-size="10.8" fill="#111">7.506</text><text transform="translate(288.54,658.3) rotate(-90) scale(1,0.88)" text-anchor="end" font-size="10" letter-spacing="0.12" fill="#000" stroke="#000" stroke-width="0.2">Hyundai</text><text transform="translate(300.44,658.3) rotate(-90) scale(1,0.88)" text-anchor="end" font-size="10" letter-spacing="0.12" fill="#000" stroke="#000" stroke-width="0.2">Solaris</text><rect x="323.5" y="601.5" width="36" height="13" fill="#fff" stroke="#6e6e6e" stroke-width="1"/><text transform="translate(341.10,612.70) scale(1,1.14)" text-anchor="middle" font-size="10.8" fill="#111">6.271</text><text transform="translate(343.35,658.3) rotate(-90) scale(1,0.88)" text-anchor="end" font-size="10" letter-spacing="0.12" fill="#000" stroke="#000" stroke-width="0.2">VW Polo</text><rect x="372.5" y="603.5" width="36" height="13" fill="#fff" stroke="#6e6e6e" stroke-width="1"/><text transform="translate(390.10,614.70) scale(1,1.14)" text-anchor="middle" font-size="10.8" fill="#111">6.006</text><text transform="translate(386.26,658.3) rotate(-90) scale(1,0.88)" text-anchor="end" font-size="10" letter-spacing="0.12" fill="#000" stroke="#000" stroke-width="0.2">LADA</text><text transform="translate(398.16,658.3) rotate(-90) scale(1,0.88)" text-anchor="end" font-size="10" letter-spacing="0.12" fill="#000" stroke="#000" stroke-width="0.2">Largus</text><rect x="421.5" y="604.5" width="36" height="13" fill="#fff" stroke="#6e6e6e" stroke-width="1"/><text transform="translate(439.10,615.70) scale(1,1.14)" text-anchor="middle" font-size="10.8" fill="#111">5.680</text><text transform="translate(435.12,658.3) rotate(-90) scale(1,0.88)" text-anchor="end" font-size="10" letter-spacing="0.12" fill="#000" stroke="#000" stroke-width="0.2">Toyota</text><text transform="translate(447.02,658.3) rotate(-90) scale(1,0.88)" text-anchor="end" font-size="10" letter-spacing="0.12" fill="#000" stroke="#000" stroke-width="0.2">RAV4</text><rect x="470.5" y="606.5" width="36" height="13" fill="#fff" stroke="#6e6e6e" stroke-width="1"/><text transform="translate(488.10,617.70) scale(1,1.14)" text-anchor="middle" font-size="10.8" fill="#111">5.432</text><text transform="translate(478.03,658.3) rotate(-90) scale(1,0.88)" text-anchor="end" font-size="10" letter-spacing="0.12" fill="#000" stroke="#000" stroke-width="0.2">LADA</text><text transform="translate(489.93,658.3) rotate(-90) scale(1,0.88)" text-anchor="end" font-size="10" letter-spacing="0.12" fill="#000" stroke="#000" stroke-width="0.2">2191</text><text transform="translate(501.83,658.3) rotate(-90) scale(1,0.88)" text-anchor="end" font-size="10" letter-spacing="0.12" fill="#000" stroke="#000" stroke-width="0.2">Granta</text><rect x="518.5" y="607.5" width="36" height="13" fill="#fff" stroke="#6e6e6e" stroke-width="1"/><text transform="translate(536.10,618.70) scale(1,1.14)" text-anchor="middle" font-size="10.8" fill="#111">5.315</text><text transform="translate(532.84,658.3) rotate(-90) scale(1,0.88)" text-anchor="end" font-size="10" letter-spacing="0.12" fill="#000" stroke="#000" stroke-width="0.2">Renault</text><text transform="translate(544.74,658.3) rotate(-90) scale(1,0.88)" text-anchor="end" font-size="10" letter-spacing="0.12" fill="#000" stroke="#000" stroke-width="0.2">Duster</text><rect x="567.5" y="611.5" width="36" height="13" fill="#fff" stroke="#6e6e6e" stroke-width="1"/><text transform="translate(585.10,622.70) scale(1,1.14)" text-anchor="middle" font-size="10.8" fill="#111">4.549</text><text transform="translate(581.70,658.3) rotate(-90) scale(1,0.88)" text-anchor="end" font-size="10" letter-spacing="0.12" fill="#000" stroke="#000" stroke-width="0.2">Skoda</text><text transform="translate(593.60,658.3) rotate(-90) scale(1,0.88)" text-anchor="end" font-size="10" letter-spacing="0.12" fill="#000" stroke="#000" stroke-width="0.2">Rapid</text><rect x="616.5" y="612.5" width="36" height="13" fill="#fff" stroke="#6e6e6e" stroke-width="1"/><text transform="translate(634.10,623.70) scale(1,1.14)" text-anchor="middle" font-size="10.8" fill="#111">4.306</text><text transform="translate(630.56,658.3) rotate(-90) scale(1,0.88)" text-anchor="end" font-size="10" letter-spacing="0.12" fill="#000" stroke="#000" stroke-width="0.2">Renault</text><text transform="translate(642.46,658.3) rotate(-90) scale(1,0.88)" text-anchor="end" font-size="10" letter-spacing="0.12" fill="#000" stroke="#000" stroke-width="0.2">Logan</text><rect x="665.5" y="613.5" width="36" height="13" fill="#fff" stroke="#6e6e6e" stroke-width="1"/><text transform="translate(683.10,624.70) scale(1,1.14)" text-anchor="middle" font-size="10.8" fill="#111">4.198</text><text transform="translate(679.42,658.3) rotate(-90) scale(1,0.88)" text-anchor="end" font-size="10" letter-spacing="0.12" fill="#000" stroke="#000" stroke-width="0.2">VW</text><text transform="translate(691.32,658.3) rotate(-90) scale(1,0.88)" text-anchor="end" font-size="10" letter-spacing="0.12" fill="#000" stroke="#000" stroke-width="0.2">Tiguan</text><rect x="714.5" y="614.5" width="36" height="13" fill="#fff" stroke="#6e6e6e" stroke-width="1"/><text transform="translate(732.10,625.70) scale(1,1.14)" text-anchor="middle" font-size="10.8" fill="#111">3.988</text><text transform="translate(728.28,658.3) rotate(-90) scale(1,0.88)" text-anchor="end" font-size="10" letter-spacing="0.12" fill="#000" stroke="#000" stroke-width="0.2">Kia</text><text transform="translate(740.18,658.3) rotate(-90) scale(1,0.88)" text-anchor="end" font-size="10" letter-spacing="0.12" fill="#000" stroke="#000" stroke-width="0.2">Sportage</text><rect x="763.5" y="614.5" width="36" height="13" fill="#fff" stroke="#6e6e6e" stroke-width="1"/><text transform="translate(781.10,625.70) scale(1,1.14)" text-anchor="middle" font-size="10.8" fill="#111">3.921</text><text transform="translate(777.14,658.3) rotate(-90) scale(1,0.88)" text-anchor="end" font-size="10" letter-spacing="0.12" fill="#000" stroke="#000" stroke-width="0.2">Mazda</text><text transform="translate(789.04,658.3) rotate(-90) scale(1,0.88)" text-anchor="end" font-size="10" letter-spacing="0.12" fill="#000" stroke="#000" stroke-width="0.2">CX-5</text><rect x="812.5" y="615.5" width="36" height="13" fill="#fff" stroke="#6e6e6e" stroke-width="1"/><text transform="translate(830.10,626.70) scale(1,1.14)" text-anchor="middle" font-size="10.8" fill="#111">3.841</text><text transform="translate(826.00,658.3) rotate(-90) scale(1,0.88)" text-anchor="end" font-size="10" letter-spacing="0.12" fill="#000" stroke="#000" stroke-width="0.2">Renault</text><text transform="translate(837.90,658.3) rotate(-90) scale(1,0.88)" text-anchor="end" font-size="10" letter-spacing="0.12" fill="#000" stroke="#000" stroke-width="0.2">Sandero</text><rect x="861.5" y="616.5" width="36" height="13" fill="#fff" stroke="#6e6e6e" stroke-width="1"/><text transform="translate(879.10,627.70) scale(1,1.14)" text-anchor="middle" font-size="10.8" fill="#111">3.633</text><text transform="translate(868.91,658.3) rotate(-90) scale(1,0.88)" text-anchor="end" font-size="10" letter-spacing="0.12" fill="#000" stroke="#000" stroke-width="0.2">Chery</text><text transform="translate(880.81,658.3) rotate(-90) scale(1,0.88)" text-anchor="end" font-size="10" letter-spacing="0.12" fill="#000" stroke="#000" stroke-width="0.2">Tiggo</text><text transform="translate(892.71,658.3) rotate(-90) scale(1,0.88)" text-anchor="end" font-size="10" letter-spacing="0.12" fill="#000" stroke="#000" stroke-width="0.2">(T11)</text><rect x="909.5" y="618.5" width="36" height="13" fill="#fff" stroke="#6e6e6e" stroke-width="1"/><text transform="translate(927.10,629.70) scale(1,1.14)" text-anchor="middle" font-size="10.8" fill="#111">3.307</text><text transform="translate(923.72,658.3) rotate(-90) scale(1,0.88)" text-anchor="end" font-size="10" letter-spacing="0.12" fill="#000" stroke="#000" stroke-width="0.2">LADA</text><text transform="translate(935.62,658.3) rotate(-90) scale(1,0.88)" text-anchor="end" font-size="10" letter-spacing="0.12" fill="#000" stroke="#000" stroke-width="0.2">X-Ray</text><rect x="958.5" y="618.5" width="36" height="13" fill="#fff" stroke="#6e6e6e" stroke-width="1"/><text transform="translate(976.10,629.70) scale(1,1.14)" text-anchor="middle" font-size="10.8" fill="#111">3.259</text><text transform="translate(972.58,658.3) rotate(-90) scale(1,0.88)" text-anchor="end" font-size="10" letter-spacing="0.12" fill="#000" stroke="#000" stroke-width="0.2">LADA 2121</text><text transform="translate(984.48,658.3) rotate(-90) scale(1,0.88)" text-anchor="end" font-size="10" letter-spacing="0.12" fill="#000" stroke="#000" stroke-width="0.2">Niva</text><rect x="1007.5" y="642.5" width="36" height="13" fill="#fff" stroke="#6e6e6e" stroke-width="1"/><text transform="translate(1025.10,653.70) scale(1,1.14)" text-anchor="middle" font-size="10.8" fill="#111">3.257</text><text transform="translate(1021.44,658.3) rotate(-90) scale(1,0.88)" text-anchor="end" font-size="10" letter-spacing="0.12" fill="#000" stroke="#000" stroke-width="0.2">LADA 2123</text><text transform="translate(1033.34,658.3) rotate(-90) scale(1,0.88)" text-anchor="end" font-size="10" letter-spacing="0.12" fill="#000" stroke="#000" stroke-width="0.2">Niva</text><rect x="48" y="655.85" width="1027.2" height="1.25" fill="#000"/><rect x="45" y="731" width="22" height="9" fill="#87ceeb"/><text transform="translate(72.2,740.2) scale(1,1.14)" font-size="10.88" fill="#111">Рег.->Янв-Фев 2021</text></svg>
</body></html>
